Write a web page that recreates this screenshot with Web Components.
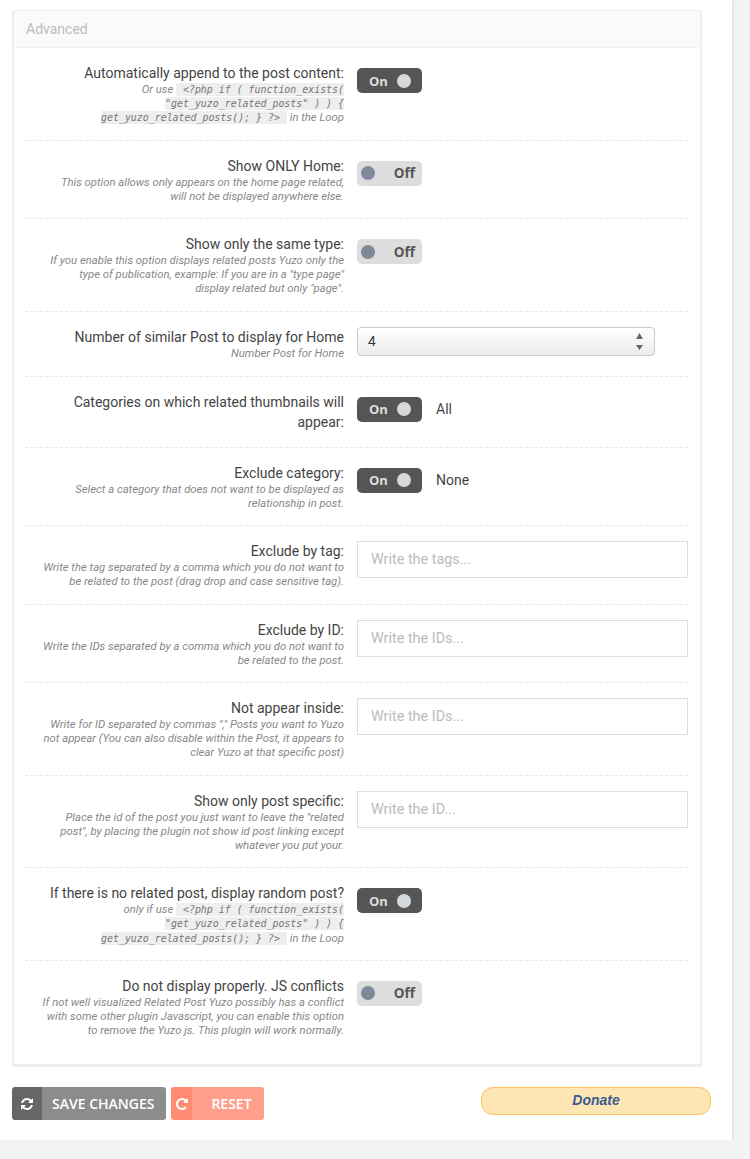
<!DOCTYPE html>
<html>
<head>
<meta charset="utf-8">
<style>
  html, body { margin: 0; background: #f3f3f3; }
  body { font-family: Roboto, "Liberation Sans", sans-serif; }
</style>
</head>
<body>
<option-page>
  <option-panel title="Advanced">
    <option-row label="Automatically append to the post content:">
      Or use <code-chip>&lt;?php if ( function_exists( "get_yuzo_related_posts" ) ) { get_yuzo_related_posts(); } ?&gt;</code-chip> in the Loop
      <on-off slot="control" on></on-off>
    </option-row>
    <option-row label="Show ONLY Home:">
      This option allows only appears on the home page related, will not be displayed anywhere else.
      <on-off slot="control"></on-off>
    </option-row>
    <option-row label="Show only the same type:">
      If you enable this option displays related posts Yuzo only the type of publication, example: If you are in a "type page"<br>display related but only "page".
      <on-off slot="control"></on-off>
    </option-row>
    <option-row label="Number of similar Post to display for Home" style="padding-bottom: 15px">
      Number Post for Home
      <select-box slot="control" value="4"></select-box>
    </option-row>
    <option-row label="Categories on which related thumbnails will appear:" style="padding-bottom: 15px">
      <on-off slot="control" on note="All"></on-off>
    </option-row>
    <option-row label="Exclude category:">
      Select a category that does not want to be displayed as relationship in post.
      <on-off slot="control" on note="None"></on-off>
    </option-row>
    <option-row label="Exclude by tag:">
      Write the tag separated by a comma which you do not want to be related to the post (drag drop and case sensitive tag).
      <text-box slot="control" placeholder="Write the tags..."></text-box>
    </option-row>
    <option-row label="Exclude by ID:">
      Write the IDs separated by a comma which you do not want to be related to the post.
      <text-box slot="control" placeholder="Write the IDs..."></text-box>
    </option-row>
    <option-row label="Not appear inside:">
      Write for ID separated by commas "," Posts you want to Yuzo not appear (You can also disable within the Post, it appears to clear Yuzo at that specific post)
      <text-box slot="control" placeholder="Write the IDs..."></text-box>
    </option-row>
    <option-row label="Show only post specific:">
      Place the id of the post you just want to leave the "related post", by placing the plugin not show id post linking except whatever you put your.
      <text-box slot="control" placeholder="Write the ID..."></text-box>
    </option-row>
    <option-row label="If there is no related post, display random post?">
      only if use <code-chip>&lt;?php if ( function_exists( "get_yuzo_related_posts" ) ) { get_yuzo_related_posts(); } ?&gt;</code-chip> in the Loop
      <on-off slot="control" on></on-off>
    </option-row>
    <option-row label="Do not display properly. JS conflicts" last>
      If not well visualized Related Post Yuzo possibly has a conflict with some other plugin Javascript, you can enable this option to remove the Yuzo js. This plugin will work normally.
      <on-off slot="control"></on-off>
    </option-row>
  </option-panel>
  <action-button slot="footer" icon="refresh" tone="save">SAVE CHANGES</action-button>
  <action-button slot="footer" icon="repeat" tone="reset">RESET</action-button>
  <donate-button slot="footer">Donate</donate-button>
</option-page>

<script>
const ICONS = {
  refresh: "M1639 1056q0 5-1 7-64 268-268 434.5t-478 166.5q-146 0-282.5-55t-243.5-157l-129 129q-19 19-45 19t-45-19-19-45v-448q0-26 19-45t45-19h448q26 0 45 19t19 45-19 45l-137 137q71 66 161 102t187 36q134 0 250-65t186-179q11-17 53-117 8-23 30-23h192q13 0 22.5 9.5t9.5 22.5zm25-800v448q0 26-19 45t-45 19h-448q-26 0-45-19t-19-45 19-45l138-138q-148-137-349-137-134 0-250 65t-186 179q-11 17-53 117-8 23-30 23h-199q-13 0-22.5-9.5t-9.5-22.5v-7q65-268 270-434.5t480-166.5q146 0 284 55.5t245 156.5l130-129q19-19 45-19t45 19 19 45z",
  repeat: "M1664 256v448q0 26-19 45t-45 19h-448q-42 0-59-40-17-39 14-69l138-138q-148-137-349-137-104 0-198.5 40.5t-163.5 109.5-109.5 163.5-40.5 198.5 40.5 198.5 109.5 163.5 163.5 109.5 198.5 40.5q119 0 225-52t179-147q7-10 23-12 15 0 25 9l137 138q9 8 9.5 20.5t-7.5 22.5q-109 132-264 204.5t-327 72.5q-156 0-298-61t-245-164-164-245-61-298 61-298 164-245 245-164 298-61q147 0 284.5 55.5t244.5 156.5l130-129q29-31 70-14 39 17 39 59z"
};

class OptionPage extends HTMLElement {
  connectedCallback() {
    this.attachShadow({ mode: "open" });
    this.shadowRoot.innerHTML = `
    <style>
      :host { display: block; width: 732px; height: 1140px; box-sizing: border-box; padding: 10px 0 0 12px; background: #fff; box-shadow: 1px 1px 2px #ddd; }
      .main { width: 690px; }
      .footer { display: flex; align-items: flex-start; gap: 5px; margin-top: 20px; width: 699px; }
    </style>
    <div class="main"><slot></slot></div>
    <div class="footer"><slot name="footer"></slot></div>`;
  }
}

class OptionPanel extends HTMLElement {
  connectedCallback() {
    this.attachShadow({ mode: "open" });
    this.shadowRoot.innerHTML = `
    <style>
      :host { display: block; box-sizing: border-box; height: 1057px; background: #fff; border: 1px solid #eee; border-width: 1px 2px 3px 2px; border-radius: 3px; }
      .head { height: 36px; padding-left: 12px; background: #fafafa; border-bottom: 1px solid #f0f0f0; color: #bbb; font: 14px/36px Roboto, sans-serif; }
      .rows { padding: 0 12px 0 11px; }
    </style>
    <div class="head"></div>
    <div class="rows"><slot></slot></div>`;
    this.shadowRoot.querySelector(".head").textContent = this.getAttribute("title");
    this.removeAttribute("title");
  }
}

class OptionRow extends HTMLElement {
  connectedCallback() {
    this.attachShadow({ mode: "open" });
    this.shadowRoot.innerHTML = `
    <style>
      :host { display: flex; gap: 13px; padding: 15px 0 14px; border-bottom: 1px dashed #e8e8e8; }
      :host([last]) { border-bottom: 0; }
      .left { flex: none; box-sizing: border-box; width: 319px; padding-left: 17px; text-align: right; }
      .label { font: 14px/20px Roboto, sans-serif; color: #444; }
      .desc { font: italic 11.3px/14.2px Roboto, sans-serif; color: #888; }
      .right { flex: 1; min-width: 0; }
    </style>
    <div class="left">
      <div class="label"></div>
      <div class="desc"><slot></slot></div>
    </div>
    <div class="right"><slot name="control"></slot></div>`;
    this.shadowRoot.querySelector(".label").textContent = this.getAttribute("label");
  }
}

class CodeChip extends HTMLElement {
  connectedCallback() {
    this.attachShadow({ mode: "open" });
    this.shadowRoot.innerHTML = `
    <style>
      :host { display: inline; padding: 1px 7px; background: #eee; color: #777; font: italic 9.92px/10px "DejaVu Sans Mono", monospace; }
    </style>
    <slot></slot>`;
  }
}

class OnOff extends HTMLElement {
  connectedCallback() {
    const on = this.hasAttribute("on");
    this.attachShadow({ mode: "open" });
    this.shadowRoot.innerHTML = `
    <style>
      :host { display: flex; align-items: center; gap: 14px; padding-top: 5px; }
      .sw { display: flex; align-items: center; justify-content: space-between; box-sizing: border-box; width: 65px; height: 25px; padding: 0 11px 0 12px; border-radius: 5px; background: #555; color: #ddd; font: 700 13px "Open Sans", sans-serif; }
      .sw.off { background: #ddd; color: #555; padding: 0 7px 0 4px; font-size: 13.5px; }
      i { width: 14px; height: 14px; border-radius: 50%; background: #d5d9dc; }
      .off i { background: #7c8a9a; }
      .note { font: 14px/20px Roboto, sans-serif; color: #444; }
    </style>
    <div class="sw ${on ? "" : "off"}">${on ? "<span>On</span><i></i>" : "<i></i><span>Off</span>"}</div>
    ${this.getAttribute("note") ? `<span class="note">${this.getAttribute("note")}</span>` : ""}`;
  }
}

class SelectBox extends HTMLElement {
  connectedCallback() {
    this.attachShadow({ mode: "open" });
    this.shadowRoot.innerHTML = `
    <style>
      :host { display: block; }
      .box { display: flex; align-items: center; justify-content: space-between; box-sizing: border-box; width: 298px; height: 29px; padding: 0 11px 0 10px; border: 1px solid #ccc; border-radius: 4px; background: linear-gradient(#fff, #ececec); font: 14px "Liberation Sans", sans-serif; color: #333; }
      svg { display: block; }
    </style>
    <div class="box"><span>${this.getAttribute("value")}</span>
      <svg width="7" height="17" viewBox="0 0 7 17"><path d="M3.5 0L7 6H0zM0 12h7l-3.500 5z" fill="#666"/></svg>
    </div>`;
  }
}

class TextBox extends HTMLElement {
  connectedCallback() {
    this.attachShadow({ mode: "open" });
    this.shadowRoot.innerHTML = `
    <style>
      :host { display: block; }
      input { display: block; box-sizing: border-box; width: 331px; height: 37px; padding: 0 13px; border: 1px solid #ddd; background: #fff; outline: 0; font: 14.4px Roboto, sans-serif; }
      input::placeholder { color: #bbb; opacity: 1; }
    </style>
    <input type="text">`;
    this.shadowRoot.querySelector("input").placeholder = this.getAttribute("placeholder");
  }
}

class ActionButton extends HTMLElement {
  connectedCallback() {
    const icon = ICONS[this.getAttribute("icon")];
    this.attachShadow({ mode: "open" });
    this.shadowRoot.innerHTML = `
    <style>
      :host { display: flex; height: 33px; border-radius: 3px; overflow: hidden; color: #fff; font: 600 14px/33px "Open Sans", sans-serif; }
      .ic { display: flex; align-items: center; justify-content: center; width: 30px; }
      .tx { padding: 0 10px; }
      :host([tone=save]) .ic { background: #666; }
      :host([tone=save]) .tx { background: #8c8c8c; padding: 0 12px 0 10px; }
      :host([tone=reset]) .ic { background: #ff8c72; width: 21px; }
      :host([tone=reset]) .tx { background: #fd9f8b; padding: 0 12px 0 19px; }
    </style>
    <span class="ic"><svg width="14" height="14" viewBox="0 0 1792 1792"><path d="${icon}" fill="#fff"/></svg></span>
    <span class="tx"><slot></slot></span>`;
  }
}

class DonateButton extends HTMLElement {
  connectedCallback() {
    this.attachShadow({ mode: "open" });
    this.shadowRoot.innerHTML = `
    <style>
      :host { display: block; box-sizing: border-box; width: 230px; height: 28px; margin-left: auto; border: 1px solid #fcc35c; border-radius: 12px; background: #fde6b4; color: #3b5a90; text-align: center; font: italic 700 14px/25px "Liberation Sans", sans-serif; }
    </style>
    <slot></slot>`;
  }
}

customElements.define("option-page", OptionPage);
customElements.define("option-panel", OptionPanel);
customElements.define("option-row", OptionRow);
customElements.define("code-chip", CodeChip);
customElements.define("on-off", OnOff);
customElements.define("select-box", SelectBox);
customElements.define("text-box", TextBox);
customElements.define("action-button", ActionButton);
customElements.define("donate-button", DonateButton);
</script>
</body>
</html>
